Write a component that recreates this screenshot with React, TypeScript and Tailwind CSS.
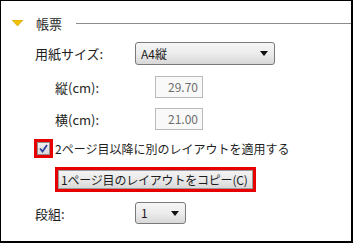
const font = { fontFamily: '"Noto Sans CJK JP", "Noto Sans", sans-serif' };

function DropArrow() {
  return (
    <svg width="8" height="5" viewBox="0 0 8 5" className="shrink-0">
      <polygon points="0,0 8,0 4,5" fill="#111" />
    </svg>
  );
}

function Select({ value, width }: { value: string; width: string }) {
  return (
    <div
      className={`${width} h-full flex items-center justify-between pl-[5px] pr-[6px] rounded-[3px] border border-[#7a7a7a] bg-gradient-to-b from-[#f6f6f6] via-[#ececec] to-[#d8d8d8] text-[12px] text-[#1a1a1a]`}
    >
      <span>{value}</span>
      <DropArrow />
    </div>
  );
}

function NumBox({ value }: { value: string }) {
  return (
    <div className="w-[48px] h-full flex items-center justify-end pr-[4px] border border-[#b9b9b9] bg-[#f9f9f9] text-[12px] text-[#6d6d6d]">
      {value}
    </div>
  );
}

export default function App() {
  return (
    <div style={font} className="w-[354px] h-[244px] bg-white">
      <div className="w-[353px] h-[243px] border-l border-t border-r-2 border-b-2 border-black flex flex-col pt-[13px] text-[12px] text-[#1e1e1e] leading-none">
        {/* Header */}
        <div className="h-[18px] flex items-center">
          <svg width="11" height="6" viewBox="0 0 11 6" className="ml-[11px]">
            <polygon points="0,0 11,0 5.5,6" fill="#f2c200" stroke="#c89a00" strokeWidth="0.6" />
          </svg>
          <span className="ml-[13px] text-[13px]">帳票</span>
          <div className="ml-[14px] flex-1 h-px bg-[#8c8c8c]" />
        </div>

        {/* 用紙サイズ */}
        <div className="mt-[10px] h-[23px] flex items-center">
          <span className="ml-[34px] w-[100px] text-[13px]">用紙サイズ:</span>
          <Select value="A4縦" width="w-[140px]" />
        </div>

        <div className="mt-[11px] h-[22px] flex items-center">
          <span className="ml-[54px] w-[100px] text-[13px]">縦(cm):</span>
          <NumBox value="29.70" />
        </div>

        <div className="mt-[10px] h-[22px] flex items-center">
          <span className="ml-[54px] w-[100px] text-[13px]">横(cm):</span>
          <NumBox value="21.00" />
        </div>

        {/* Checkbox */}
        <div className="mt-[9px] h-[19px] flex items-center">
          <div className="ml-[33px] w-[19px] h-[19px] border-[3px] border-[#e60000] flex items-center justify-center">
            <div className="w-[13px] h-[13px] border border-[#8f8f8f] bg-gradient-to-b from-[#f2f2f2] to-[#d8d8d8] flex items-center justify-center">
              <svg width="9" height="9" viewBox="0 0 9 9">
                <path d="M1 4.5 L3.5 7.5 L8 1" fill="none" stroke="#2a3fa0" strokeWidth="1.8" />
              </svg>
            </div>
          </div>
          <span className="ml-[2px] text-[12px] whitespace-nowrap">2ページ目以降に別のレイアウトを適用する</span>
        </div>

        {/* Button */}
        <div className="mt-[9px] h-[25px] flex">
          <div className="ml-[54px] w-[201px] h-full border-[3px] border-[#e60000]">
            <div className="w-full h-full border border-[#9a9a9a] bg-gradient-to-b from-[#f3f3f3] via-[#e9e9e9] to-[#d9d9d9] flex items-center pl-[2px] text-[12px] whitespace-nowrap tracking-[-0.2px] overflow-hidden">
              1ページ目のレイアウトをコピー(C)
            </div>
          </div>
        </div>

        {/* 段組 */}
        <div className="mt-[10px] h-[22px] flex items-center">
          <span className="ml-[34px] w-[100px] text-[13px]">段組:</span>
          <Select value="1" width="w-[51px]" />
        </div>
      </div>
    </div>
  );
}
